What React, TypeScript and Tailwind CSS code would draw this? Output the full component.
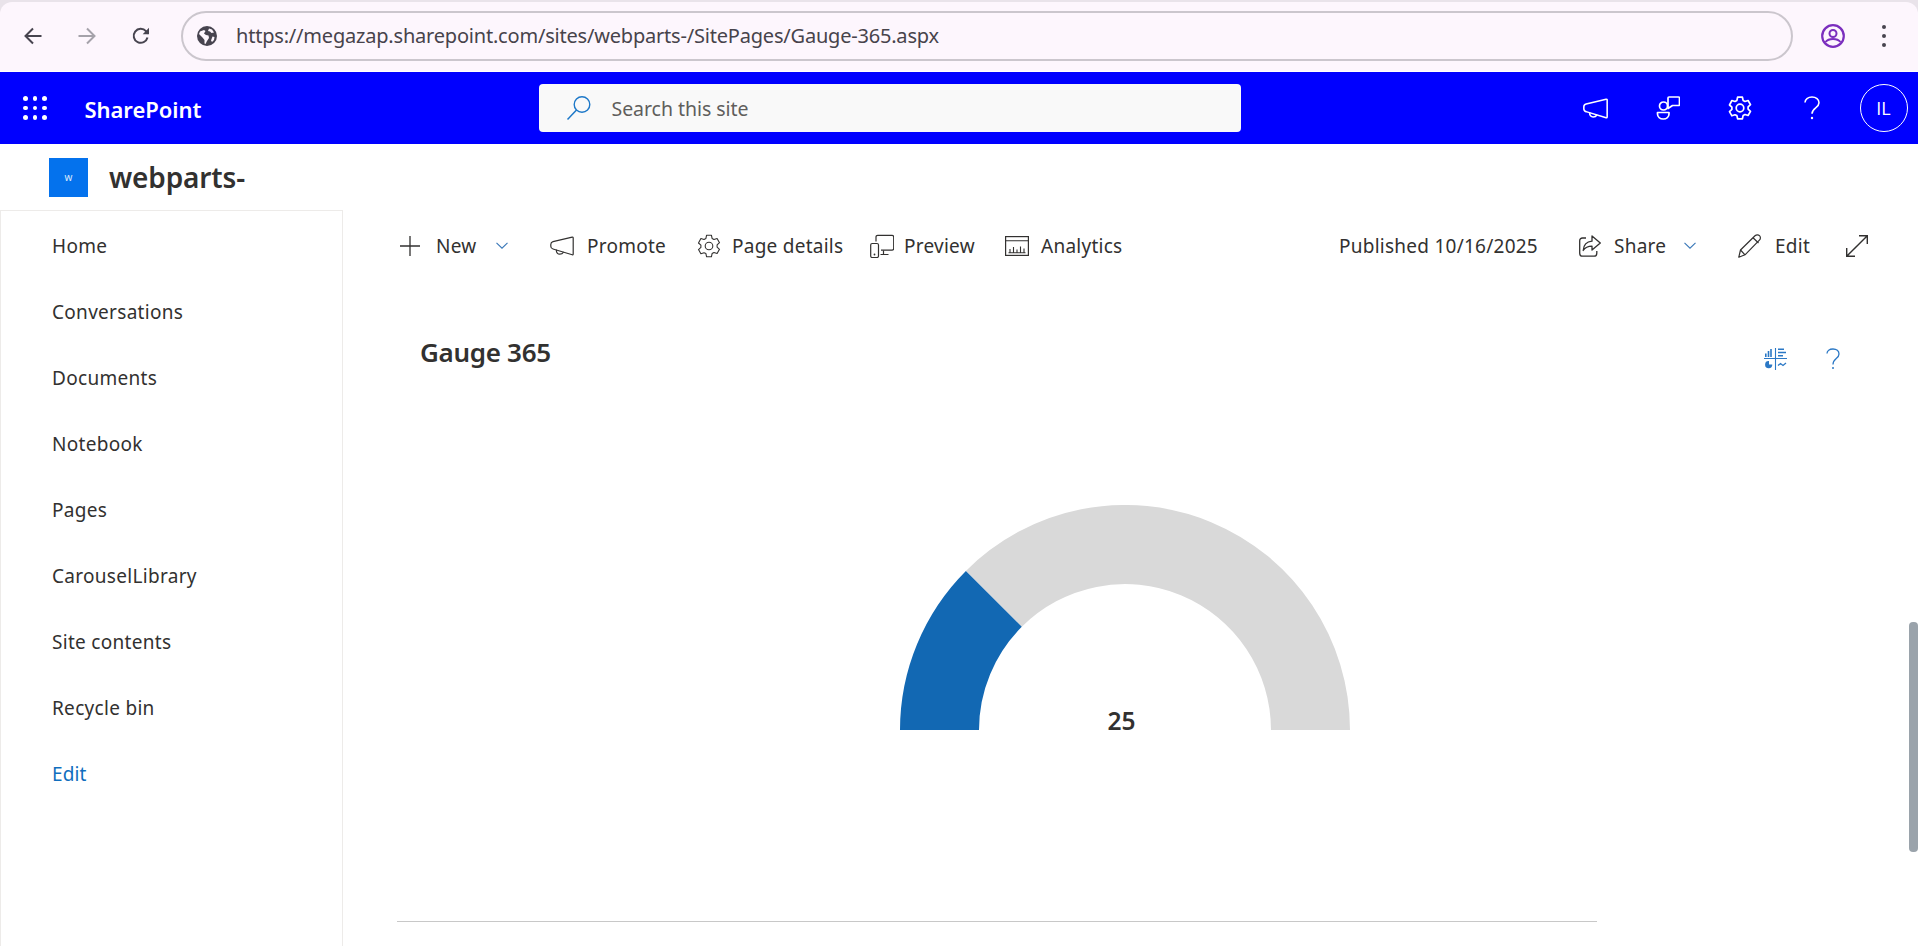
import React from "react";

const S = ({ w, h, vb, className, children }: { w: number; h: number; vb: string; className?: string; children: React.ReactNode }) => (
  <svg width={w} height={h} viewBox={vb} fill="none" stroke="currentColor" className={`shrink-0 ${className ?? ""}`}>
    {children}
  </svg>
);

const Megaphone = ({ w, sw, className }: { w: number; sw: number; className?: string }) => (
  <S w={w} h={Math.round((w * 20) / 24)} vb="0 0 24 20" className={className}>
    <path d="M22.200 1.100 3 5.600C1.500 6 .8 7 .8 8.400v1.800c0 1.400.7 2.400 2.200 2.800l19.200 5.800c.6.200 1-.2 1-.8V1.900c0-.6-.4-.9-1-.8Z" strokeWidth={sw} strokeLinejoin="round" />
    <path d="M6.400 14.200c-.2 2.300 1.300 4 3.400 4 1.600 0 2.900-.8 3.400-1.800" strokeWidth={sw} strokeLinecap="round" />
  </S>
);

const Gear = ({ size, sw, className }: { size: number; sw: number; className?: string }) => (
  <S w={size} h={size} vb="0 0 24 24" className={className}>
    <path
      d="M9.600 1.200h4.800l.7 3.200 1.900 1.100 3.100-1 2.400 4.200-2.400 2.200v2.200l2.400 2.200-2.400 4.200-3.100-1-1.900 1.100-.7 3.200H9.600l-.7-3.200L7 18.800l-3.100 1-2.400-4.200 2.400-2.200v-2.200L1.500 9l2.400-4.500 3.100 1 1.900-1.100.7-3.200Z"
      strokeWidth={sw}
      strokeLinejoin="round"
    />
    <circle cx="12" cy="12" r="3.800" strokeWidth={sw} />
  </S>
);

const Chevron = ({ className }: { className?: string }) => (
  <S w={12} h={7} vb="0 0 12 7" className={`text-[#3a78b8] ${className ?? ""}`}>
    <path d="M.5.8 6 6.200 11.500.8" strokeWidth={1.100} />
  </S>
);

const navItems = ["Home", "Conversations", "Documents", "Notebook", "Pages", "CarouselLibrary", "Site contents", "Recycle bin"];

const Label = ({ w, children, className }: { w: number; children: React.ReactNode; className?: string }) => (
  <span style={{ width: w }} className={`block shrink-0 whitespace-nowrap pt-[1px] text-[19px] tracking-[0.25px] text-[#323130] ${className ?? ""}`}>
    {children}
  </span>
);

export default function App() {
  return (
    <div className="relative flex h-[946px] w-[1918px] flex-col overflow-hidden bg-white font-['Noto_Sans',sans-serif]">
      {/* browser chrome */}
      <div className="h-[72px] shrink-0 bg-[#e9e3ea]">
        <div className="mt-[2px] flex h-[69px] items-center rounded-tl-[12px] rounded-tr-[12px] bg-[#fdf6fd] pb-[2px] pl-[24px] pr-[28px]">
          <S w={18} h={18} vb="0 0 18 18" className="text-[#47444f]">
            <path d="M17.500 9H1.500M9 1.500 1.500 9 9 16.500" strokeWidth={2} />
          </S>
          <S w={18} h={18} vb="0 0 18 18" className="ml-[36px] text-[#a5a2aa]">
            <path d="M.5 9h16M9 1.500 16.500 9 9 16.500" strokeWidth={2} />
          </S>
          <S w={18} h={18} vb="0 0 18 18" className="ml-[36px] text-[#47444f]">
            <path d="M15.500 10.500A7 7 0 1 1 14 4.200L16.500 6.500" strokeWidth={2} />
            <path d="M17 .8V7.200h-6.300z" fill="currentColor" stroke="none" />
          </S>
          <div className="ml-[31px] flex h-[50px] w-[1612px] shrink-0 items-center rounded-full border-2 border-[#cbc6cd] pl-[14px]">
            <svg width="20" height="20" viewBox="0 0 20 20" className="shrink-0 text-[#47444f]">
              <circle cx="10" cy="10" r="10" fill="currentColor" />
              <path d="M3 5.500 7 4l1.500 1L7 7.500l2 1.500 2.500.5.5 2.500-2 3-1.500 3-1-.5V14L5.500 11.500 2 8Zm9-3 3 1 2 3-2.500.5-1.500-1.500-2-.5Zm3.500 8 2 .5-.5 3-2 2-1-1.500Z" fill="#fdf6fd" />
            </svg>
            <span className="ml-[19px] whitespace-nowrap text-[20px] tracking-[-0.2px] text-[#47434b]">https://megazap.sharepoint.com/sites/webparts-/SitePages/Gauge-365.aspx</span>
          </div>
          <S w={24} h={24} vb="0 0 24 24" className="ml-[28px] text-[#7b2fbe]">
            <circle cx="12" cy="12" r="10.800" strokeWidth={2.200} />
            <circle cx="12" cy="9.500" r="3.500" strokeWidth={2} />
            <path d="M4.500 18c2-2.500 4.600-3 7.500-3s5.500.5 7.500 3" strokeWidth={2} />
          </S>
          <div className="ml-[37px] flex flex-col gap-[5px]">
            <span className="h-[4px] w-[4px] rounded-full bg-[#47444f]" />
            <span className="h-[4px] w-[4px] rounded-full bg-[#47444f]" />
            <span className="h-[4px] w-[4px] rounded-full bg-[#47444f]" />
          </div>
        </div>
        <div className="h-px bg-white" />
      </div>

      {/* suite bar */}
      <div className="flex h-[72px] shrink-0 items-center bg-[#0000ff] pl-[23px] text-white">
        <div className="grid grid-cols-3 gap-[5px]">
          {Array.from({ length: 9 }).map((_, i) => (
            <span key={i} className="h-[4.500px] w-[4.500px] rounded-full bg-white" />
          ))}
        </div>
        <span className="ml-[38px] w-[117px] whitespace-nowrap pt-[3px] text-[22px] font-semibold tracking-[-0.05px]">SharePoint</span>
        <div className="ml-[337px] flex h-[48px] w-[702px] shrink-0 items-center rounded-[4px] bg-[#f9f9f9] pl-[27px]">
          <S w={26} h={26} vb="0 0 26 26" className="text-[#1d78c8]">
            <circle cx="16" cy="9.500" r="7.800" strokeWidth={1.400} />
            <path d="M10.500 15 1.500 24.500" strokeWidth={1.500} />
          </S>
          <span className="ml-[20px] pt-[2px] text-[19.500px] tracking-[-0.05px] text-[#605e5c]">Search this site</span>
        </div>
        <Megaphone w={25} sw={1.500} className="ml-[342px]" />
        <S w={24} h={24} vb="0 0 24 24" className="ml-[48px]">
          <circle cx="7.500" cy="10" r="4" strokeWidth={1.700} />
          <path d="M1.500 16.500h11.500v1.500c0 3-2.500 5-5.700 5s-5.800-2-5.800-5Z" strokeWidth={1.700} strokeLinejoin="round" />
          <path d="M13 1h9.500c.6 0 1 .4 1 1v6.500c0 .6-.4 1-1 1h-6L12 12.500V2c0-.6.4-1 1-1Z" strokeWidth={1.700} strokeLinejoin="round" />
        </S>
        <Gear size={24} sw={1.700} className="ml-[48px]" />
        <div className="ml-[52px] flex h-[24px] w-[16px] shrink-0 items-center justify-center">
          <S w={16} h={24} vb="0 0 16 24">
            <path d="M1 6.500C1 3.200 4 1 8 1s7 2.500 7 5.800c0 5.200-7 5-7 11" strokeWidth={1.600} />
            <circle cx="8" cy="22" r="1.200" fill="currentColor" stroke="none" />
          </S>
        </div>
        <div className="ml-[40px] flex h-[48px] w-[48px] shrink-0 items-center justify-center rounded-full border border-white font-['Open_Sans',sans-serif] text-[18px]">IL</div>
      </div>

      {/* site header */}
      <div className="flex h-[66px] shrink-0 items-start pl-[49px] pt-[14px]">
        <div className="flex h-[39px] w-[39px] items-center justify-center bg-[#0472ed] text-[10px] text-[#dce9fb]">w</div>
        <span className="ml-[21px] text-[28px] font-semibold leading-[39px] tracking-[-0.15px] text-[#323130]">webparts-</span>
      </div>

      {/* body */}
      <div className="flex min-h-0 flex-1">
        <nav className="w-[343px] shrink-0 border-l border-r border-t border-[#edebe9] pt-[2px]">
          {navItems.map((n) => (
            <div key={n} className="flex h-[66px] items-center pl-[51px] text-[19px] tracking-[0.3px] text-[#323130]">
              {n}
            </div>
          ))}
          <div className="flex h-[66px] items-center pl-[51px] text-[19px] tracking-[0.15px] text-[#106ebe]">Edit</div>
        </nav>

        <main className="min-w-0 flex-1">
          {/* command bar */}
          <div className="flex h-[71px] items-center pl-[57px] pr-[50px]">
            <S w={20} h={20} vb="0 0 20 20" className="text-[#323130]">
              <path d="M10 0v20M0 10h20" strokeWidth={1.300} />
            </S>
            <Label w={41} className="ml-[16px]">New</Label>
            <Chevron className="ml-[19px]" />
            <Megaphone w={24} sw={1.200} className="ml-[42px] text-[#323130]" />
            <Label w={79} className="ml-[13px]">Promote</Label>
            <Gear size={24} sw={1.100} className="ml-[31px] text-[#323130]" />
            <Label w={111} className="ml-[11px]">Page details</Label>
            <S w={24} h={24} vb="0 0 24 24" className="ml-[27px] text-[#323130]">
              <path d="M6 7.500V3c0-1 .7-1.700 1.700-1.700H22c1 0 1.700.7 1.700 1.700v11.500c0 1-.7 1.700-1.700 1.700H11" strokeWidth={1.200} />
              <rect x=".7" y="9.500" width="7.800" height="14" rx="1.500" strokeWidth={1.200} />
              <path d="M13.500 16.500v3.500M10.500 20.500h8" strokeWidth={1.200} />
              <circle cx="4.500" cy="20.500" r=".9" fill="currentColor" stroke="none" />
            </S>
            <Label w={71} className="ml-[10px]">Preview</Label>
            <S w={24} h={20} vb="0 0 24 20" className="ml-[30px] text-[#323130]">
              <rect x=".6" y=".6" width="22.800" height="18.800" strokeWidth={1.200} />
              <path d="M.6 4.800h22.800M5 16.500v-3.500M8.500 16.500v-5.500M12 16.500v-3M15.500 16.500v-6M19 16.500v-4M3.500 16.800h17" strokeWidth={1.100} />
            </S>
            <Label w={81} className="ml-[12px]">Analytics</Label>

            <Label w={202} className="ml-auto tracking-[0.7px]">Published 10/16/2025</Label>
            <S w={22} h={22} vb="0 0 22 22" className="ml-[38px] text-[#323130]">
              <path d="M7 3H3.500C1.800 3 .7 4.100.7 5.800v12.500c0 1.700 1.100 2.900 2.800 2.900h11.500c1.700 0 2.800-1.200 2.800-2.900v-2.300" strokeWidth={1.300} />
              <path d="M13 .9 21.300 8 13 15v-3.800c-4 0-6.800 1.200-8.800 4.300.3-5.300 3.300-8.700 8.800-9.300Z" strokeWidth={1.300} strokeLinejoin="round" />
            </S>
            <Label w={51} className="ml-[13px]">Share</Label>
            <Chevron className="ml-[19px]" />
            <S w={24} h={24} vb="0 0 24 24" className="ml-[42px] text-[#323130]">
              <path d="M.8 23.200 2.500 16 17 1.800c1.400-1.300 3.400-1.300 4.500-.1 1.200 1.200 1.200 3.200-.1 4.500L7 20.800Z" strokeWidth={1.200} strokeLinejoin="round" />
              <path d="m15 3.800 5.500 5.200M2.500 16l4.500 4.800" strokeWidth={1.200} />
            </S>
            <Label w={34} className="ml-[13px]">Edit</Label>
            <S w={22} h={22} vb="0 0 22 22" className="ml-[37px] text-[#323130]">
              <path d="M13 .7h8.300V9M21.300.7.700 21.300M.7 13v8.300H9" strokeWidth={1.400} />
            </S>
          </div>

          {/* webpart title */}
          <div className="flex h-[142px] items-center pl-[77px] pr-[79px]">
            <span className="text-[26px] font-semibold tracking-[-0.3px] text-[#323130]">Gauge 365</span>
            <S w={23} h={22} vb="0 0 23 22" className="ml-auto mt-[13px] text-[#2b78c5]">
              <path d="M11.500 0v22M0 10.500h23" strokeWidth={1.100} />
              <path d="M1.800 9V5.500M4.500 9V3M7 9V1M14 1.200h6M14 4.500h8M14 7.800h5" strokeWidth={1.600} />
              <path d="M5 13v3.500h3.300A3.600 3.600 0 1 1 5 13Z" fill="currentColor" stroke="none" />
              <path d="M14 17.500l2.500-2 2.500 2 3-2.500" strokeWidth={1.300} />
            </S>
            <div className="ml-[40px] mt-[13px] flex w-[12px] shrink-0 justify-center text-[#2b78c5]">
              <S w={14} h={22} vb="0 0 14 22">
                <path d="M1 5.500C1 2.800 3.500 1 7 1s6 2 6 5c0 4.800-6 4.500-6 10.500" strokeWidth={1.300} />
                <circle cx="7" cy="20" r="1" fill="currentColor" stroke="none" />
              </S>
            </div>
          </div>

          {/* gauge */}
          <div className="relative ml-[557px] mt-[82px] h-[225px] w-[450px]">
            <svg width="450" height="225" viewBox="0 0 450 225">
              <path d="M65.900 65.900A225 225 0 0 1 450 225H371A146 146 0 0 0 121.800 121.800Z" fill="#d9d9d9" />
              <path d="M0 225A225 225 0 0 1 65.900 65.900L121.800 121.800A146 146 0 0 0 79 225Z" fill="#1268b3" />
            </svg>
            <span className="absolute bottom-[-7px] left-[221.500px] w-0 whitespace-nowrap text-[24.500px] font-semibold leading-[32px] text-[#323130]">
              <span className="block w-max -translate-x-1/2">25</span>
            </span>
          </div>

          <div className="ml-[54px] mt-[191px] h-px w-[1200px] bg-[#c8c8c8]" />
        </main>
      </div>

      {/* overlay scrollbar */}
      <div className="absolute left-[1909px] top-[622px] h-[230px] w-[9px] rounded-[4px] bg-[#9aa3ab]" />
    </div>
  );
}
